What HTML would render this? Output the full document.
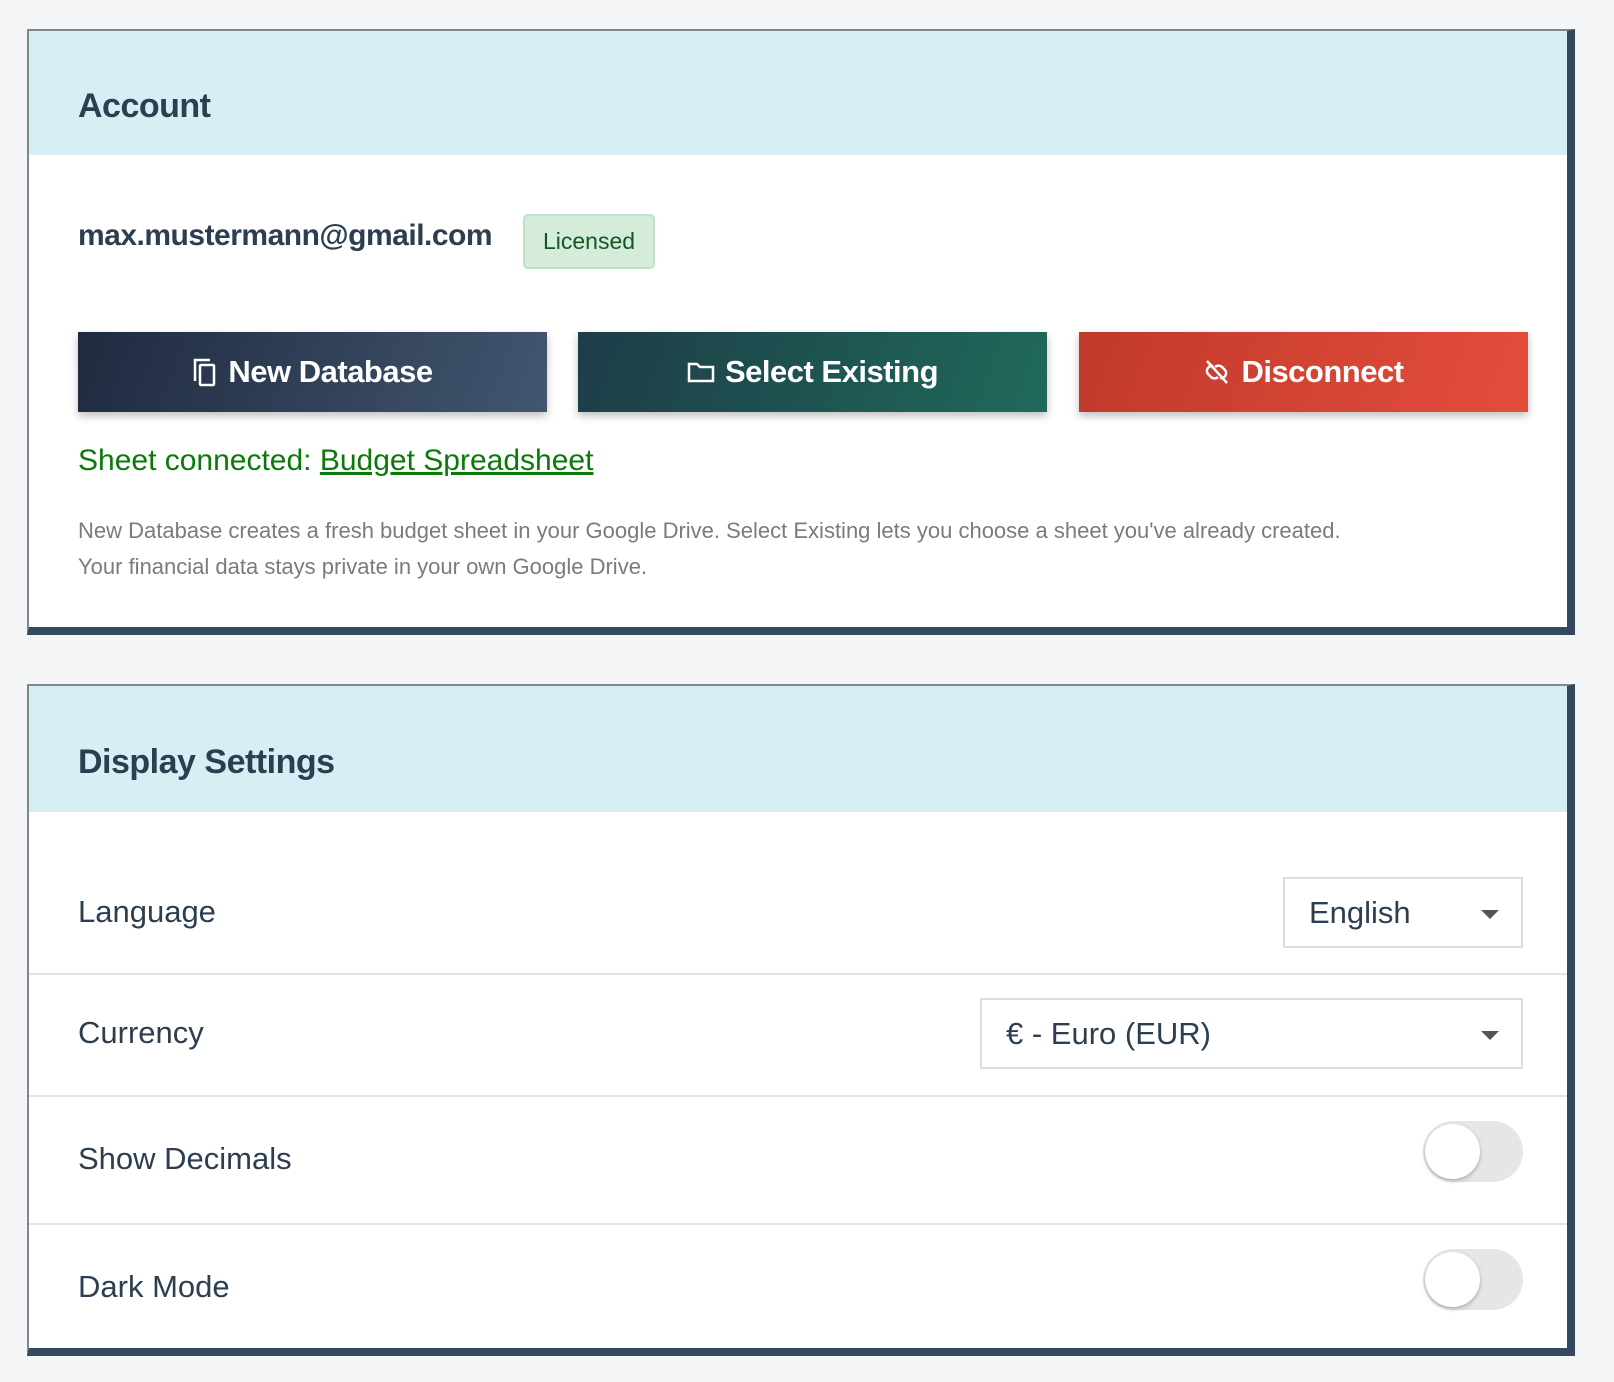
<!DOCTYPE html>
<html><head><meta charset="utf-8"><style>
*{box-sizing:border-box;margin:0;padding:0}
body{width:1614px;height:1382px;background:#f4f5f7;font-family:"Liberation Sans",sans-serif;position:relative;overflow:hidden}
.card{position:absolute;left:27px;width:1548px;background:#fff;border-left:2px solid #7f868c;border-top:2px solid #7f868c;border-right:8px solid #34495e;border-bottom:8px solid #34495e}
.hdr{position:absolute;left:0;right:0;top:0;background:#d6eff4}
.ttl{position:absolute;left:49px;font-size:34px;font-weight:bold;color:#2c3e50;letter-spacing:-0.5px}
.abs{position:absolute}
.btn{position:absolute;top:301px;height:80px;color:#fff;font-weight:bold;font-size:31px;display:flex;align-items:center;justify-content:center;gap:10px;box-shadow:0 4px 8px rgba(0,0,0,.25);letter-spacing:-0.5px}
.lbl{position:absolute;left:49px;font-size:31px;color:#2c3e50}
.sel{position:absolute;border:2px solid #ddd;background:#fff;font-size:31px;color:#2c3e50;padding-left:24px;display:flex;align-items:center}
.sel:after{content:"";position:absolute;right:22px;top:31px;border-left:9px solid transparent;border-right:9px solid transparent;border-top:9px solid #555}
.div{position:absolute;left:0;right:0;height:2px;background:#e3e3e3}
.tog{position:absolute;left:1394px;width:100px;height:61px;border-radius:31px;background:#e6e6e6}
.tog:after{content:"";position:absolute;left:2px;top:3px;width:55px;height:55px;border-radius:50%;background:#fff;box-shadow:0 2px 4px rgba(0,0,0,.25)}
</style></head><body>
<div class="card" style="top:29px;height:606px">
 <div class="hdr" style="height:124px"></div>
 <div class="ttl" style="top:56px">Account</div>
 <div class="abs" style="left:49px;top:188px;font-size:30px;font-weight:bold;color:#2c3e50;letter-spacing:-0.5px">max.mustermann@gmail.com</div>
 <div class="abs" style="left:494px;top:183px;width:132px;height:55px;background:#d4ecd9;border:2px solid #c0e2c8;border-radius:5px;color:#155724;font-size:23px;display:flex;align-items:center;justify-content:center">Licensed</div>
 <div class="btn" style="left:49px;width:469px;background:linear-gradient(110deg,#1f2a40,#42566f)">
  <svg width="26" height="30" viewBox="0 0 26 30" fill="none" stroke="#fff" stroke-width="2.5"><path d="M3 24V3h15"/><rect x="8" y="8" width="14" height="20" rx="1"/></svg>New Database</div>
 <div class="btn" style="left:549px;width:469px;background:linear-gradient(110deg,#1e3c48,#1f6a5a)">
  <svg width="28" height="22" viewBox="0 0 28 22" fill="none" stroke="#fff" stroke-width="2.5"><path d="M2 3h8l3 3h13v14H2z"/></svg>Select Existing</div>
 <div class="btn" style="left:1050px;width:449px;background:linear-gradient(110deg,#c0392b,#e44d3b)">
  <svg width="28" height="28" viewBox="0 0 28 28" fill="none" stroke="#fff" stroke-width="2.5"><path d="M4 3l20 22"/><path d="M10 8a5 5 0 0 0-5 8l3 3a5 5 0 0 0 7 0"/><path d="M17 20a5 5 0 0 0 5-8l-3-3a5 5 0 0 0-7 0"/></svg>Disconnect</div>
 <div class="abs" style="left:49px;top:413px;font-size:30px;color:#0b7a0b">Sheet connected: <u>Budget Spreadsheet</u></div>
 <div class="abs" style="left:49px;top:482px;font-size:22px;color:#7b7b7b;line-height:36px">New Database creates a fresh budget sheet in your Google Drive. Select Existing lets you choose a sheet you've already created.<br>Your financial data stays private in your own Google Drive.</div>
</div>
<div class="card" style="top:684px;height:672px">
 <div class="hdr" style="height:126px"></div>
 <div class="ttl" style="top:57px">Display Settings</div>
 <div class="lbl" style="top:208px">Language</div>
 <div class="sel" style="left:1254px;top:191px;width:240px;height:71px">English</div>
 <div class="div" style="top:287px"></div>
 <div class="lbl" style="top:329px">Currency</div>
 <div class="sel" style="left:951px;top:312px;width:543px;height:71px">€ - Euro (EUR)</div>
 <div class="div" style="top:409px"></div>
 <div class="lbl" style="top:455px">Show Decimals</div>
 <div class="tog" style="top:435px"></div>
 <div class="div" style="top:537px"></div>
 <div class="lbl" style="top:583px">Dark Mode</div>
 <div class="tog" style="top:563px"></div>
</div>
</body></html>
